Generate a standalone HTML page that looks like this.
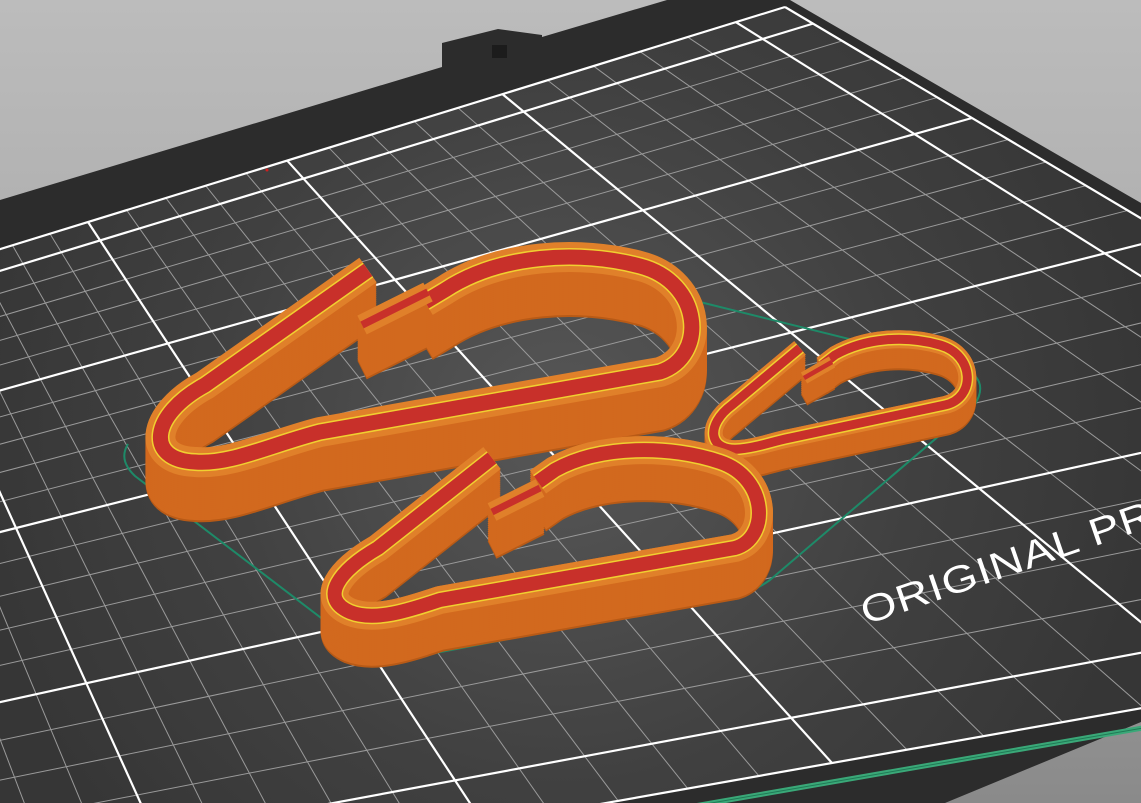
<!DOCTYPE html>
<html><head><meta charset="utf-8">
<style>
html,body{margin:0;padding:0;width:1141px;height:803px;overflow:hidden;background:#b5b5b5}
svg{display:block}
</style></head>
<body>
<svg id="s" width="1141" height="803" viewBox="0 0 1141 803" xmlns="http://www.w3.org/2000/svg">
<defs>
<linearGradient id="bg" x1="0" y1="0" x2="0" y2="1">
<stop offset="0" stop-color="#bcbcbc"/><stop offset="0.5" stop-color="#a8a8a8"/><stop offset="1" stop-color="#8a8a8a"/>
</linearGradient>
<radialGradient id="glow" cx="560" cy="430" r="600" gradientUnits="userSpaceOnUse">
<stop offset="0" stop-color="#575757"/><stop offset="0.6" stop-color="#404040"/><stop offset="1" stop-color="#363636"/>
</radialGradient>
</defs>
<rect width="1141" height="803" fill="url(#bg)"/>
<polygon points="0,200 442,67 442,43 498,29 542,35 542,37 667,0 790,0 1141,203 1141,722 945,803 0,803" fill="#2c2c2c"/>
<rect x="492" y="45" width="15" height="13" fill="#1c1c1c"/>
<g id="grid"></g>
<g id="parts"></g>
<text x="0" y="0" transform="translate(866,625) rotate(-19) scale(1.15,0.95)" font-family="Liberation Sans, sans-serif" font-size="40" fill="#ffffff" letter-spacing="1">ORIGINAL PRUSA</text>
<circle cx="267" cy="170" r="1.5" fill="#d02020"/>
</svg>
<script>
(function(){
var NS="http://www.w3.org/2000/svg";
function el(t,a,p){var e=document.createElementNS(NS,t);for(var k in a)e.setAttribute(k,a[k]);p.appendChild(e);return e;}
var src=[[0,0],[160,0],[0,60],[110,210]],dst=[[785,7],[88,222],[972,118],[832,763]];
var A=[],b=[];
for(var i=0;i<4;i++){var u=src[i][0],v=src[i][1],x=dst[i][0],y=dst[i][1];
A.push([u,v,1,0,0,0,-u*x,-v*x]);b.push(x);
A.push([0,0,0,u,v,1,-u*y,-v*y]);b.push(y);}
var n=8;for(var c=0;c<n;c++){var p=c;for(var r=c+1;r<n;r++)if(Math.abs(A[r][c])>Math.abs(A[p][c]))p=r;
var t=A[c];A[c]=A[p];A[p]=t;t=b[c];b[c]=b[p];b[p]=t;
for(var r=0;r<n;r++){if(r==c)continue;var f=A[r][c]/A[c][c];for(var k=c;k<n;k++)A[r][k]-=f*A[c][k];b[r]-=f*b[c];}}
var h=[];for(var i=0;i<n;i++)h.push(b[i]/A[i][i]);
function P(u,v){var w=h[6]*u+h[7]*v+1;return[(h[0]*u+h[1]*v+h[2])/w,(h[3]*u+h[4]*v+h[5])/w];}
var g=document.getElementById('grid');
var U=250,V=210;
var c1=P(0,0),c2=P(U,0),c3=P(U,V),c4=P(0,V);
el('polygon',{points:[c1,c2,c3,c4].map(function(q){return q.join(',')}).join(' '),fill:'url(#glow)'},g);
function line(a,b2,st,w){el('line',{x1:a[0],y1:a[1],x2:b2[0],y2:b2[1],stroke:st,'stroke-width':w},g);}
for(var u=10;u<U;u+=10){if((u-10)%50)line(P(u,0),P(u,V),'#9a9a9a',1);}
for(var v=10;v<V;v+=10){if((v-10)%50&&v!=200)line(P(0,v),P(U,v),'#9a9a9a',1);}
for(var u=10;u<U;u+=50)line(P(u,0),P(u,V),'#ffffff',2.2);
for(var v=10;v<V;v+=50)line(P(0,v),P(U,v),'#ffffff',2.2);
line(P(0,200),P(U,200),'#ffffff',2.2);
line(P(0,0),P(U,0),'#ffffff',2.2);line(P(0,0),P(0,V),'#ffffff',2.2);
line(P(0,V),P(U,V),'#ffffff',2.2);
line(P(0,V+3.5),P(U,V+3.5),'#3aa878',5);line(P(0,V+3.5),P(U,V+3.5),'#1f7a55',1);
var pg=document.getElementById('parts');
el('path',{d:'M700,302 L958,366 Q992,378 974,406 L770,580 Q742,600 700,602 L420,656 Q380,664 350,640 L135,476 Q118,460 128,444',fill:'none',stroke:'#1e8a68','stroke-width':2},pg);
function carab(d,ext,w,latch){
 var gg=el('g',{},pg);
 for(var dy=ext;dy>=0;dy-=2){
  var col=dy==ext?'#b85a16':'#d2691e';
  el('path',{d:d,transform:'translate(0,'+dy+')',fill:'none',stroke:col,'stroke-width':w,'stroke-linecap':'butt','stroke-linejoin':'round'},gg);
  if(latch)el('path',{d:latch,transform:'translate(0,'+dy+')',fill:'none',stroke:col,'stroke-width':w*0.7,'stroke-linecap':'butt'},gg);
 }
 el('path',{d:d,fill:'none',stroke:'#e0802a','stroke-width':w,'stroke-linejoin':'round'},gg);
 el('path',{d:d,fill:'none',stroke:'#f0d030','stroke-width':w*0.5+3,'stroke-linejoin':'round'},gg);
 el('path',{d:d,fill:'none',stroke:'#c8302a','stroke-width':w*0.5,'stroke-linejoin':'round'},gg);
 if(latch){el('path',{d:latch,fill:'none',stroke:'#e0802a','stroke-width':w*0.7},gg);
 el('path',{d:latch,fill:'none',stroke:'#c8302a','stroke-width':w*0.25},gg);}
}
carab('M368,270 L205,385 C150,415 145,460 195,462 C230,465 270,445 320,432 L660,372 C708,356 702,282 640,266 C580,250 500,254 445,290 L425,302',45,30,'M362,325 L428,292');
carab('M800,348 L732,405 C705,425 708,452 740,449 C760,447 770,442 790,438 L945,405 C976,398 975,355 940,345 C905,335 865,338 835,355 L822,365',22,18,'M804,378 L832,362');
carab('M492,458 L378,548 C340,570 318,598 350,612 C375,622 410,610 440,600 L735,548 C770,538 768,478 720,462 C670,445 600,445 555,470 L538,482',38,28,'M492,512 L540,488');
})();
</script>
</body></html>
